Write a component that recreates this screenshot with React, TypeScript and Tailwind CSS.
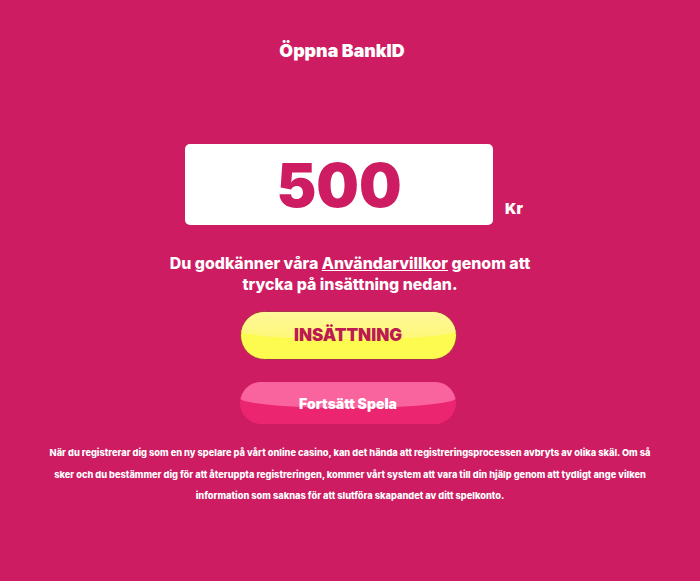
import React from "react";

const font = "font-['Inter','Noto_Sans',sans-serif]";

export default function App() {
  return (
    <div className={`${font} w-[700px] h-[581px] overflow-hidden bg-[#cd1c62] text-white flex flex-col items-center`}>
      <h1 className="mt-[41px] mr-[16px] text-[17.8px] leading-[20px] font-black">Öppna BankID</h1>

      <div className="mt-[83px] flex items-end pl-[8px]">
        <div className="w-[308px] h-[81px] rounded-[5px] bg-white flex items-center justify-center">
          <span className="text-[60px] leading-none font-black text-[#cd1c62]">500</span>
        </div>
        <span className="ml-[12px] mb-[7px] text-[15px] leading-[18px] font-black">Kr</span>
      </div>

      <p className="mt-[28px] w-[400px] text-center text-[15.9px] leading-[21px] font-extrabold">
        Du godkänner våra <span className="underline">Användarvillkor</span> genom att
        <br />
        trycka på insättning nedan.
      </p>

      <button className="relative overflow-hidden mt-[16px] mr-[4px] w-[217px] h-[49px] rounded-full border border-[#a8304a] bg-[#fdfb50] text-[#bc1a50] text-[17px] font-black">
        <span className="absolute inset-x-0 top-0 h-[27px] rounded-b-[50%_8px] bg-[linear-gradient(to_bottom,#fff79a,#fdf878)]" />
        <span className="relative">INSÄTTNING</span>
      </button>

      <button className="relative overflow-hidden mt-[22px] mr-[4px] w-[216px] h-[42px] rounded-full bg-[#ec2571] text-[14px] font-black">
        <span className="absolute inset-x-0 top-0 h-[26px] rounded-b-[50%_10px] bg-[#f9649e]" />
        <span className="relative">Fortsätt Spela</span>
      </button>

      <p className="mt-[18px] w-[640px] text-center text-[9.25px] leading-[21.5px] font-extrabold">
        När du registrerar dig som en ny spelare på vårt online casino, kan det hända att registreringsprocessen avbryts av olika skäl. Om så
        <br />
        sker och du bestämmer dig för att återuppta registreringen, kommer vårt system att vara till din hjälp genom att tydligt ange vilken
        <br />
        information som saknas för att slutföra skapandet av ditt spelkonto.
      </p>
    </div>
  );
}
